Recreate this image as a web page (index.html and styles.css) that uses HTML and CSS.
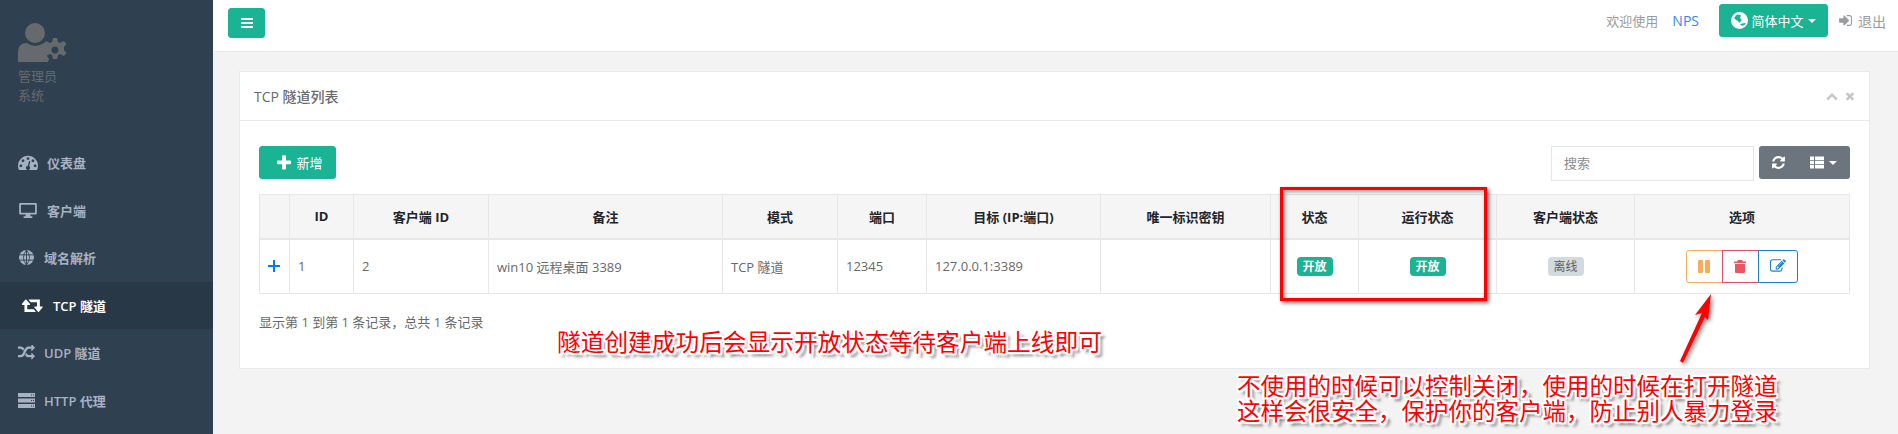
FILE: index.html
```html
<!DOCTYPE html>
<html lang="zh-CN">
<head>
  <meta charset="UTF-8" />
  <meta name="viewport" content="width=device-width, initial-scale=1.0"/>
  <title>TCP 隧道列表</title>
  <link rel="stylesheet" href="styles.css">
</head>
<body>
  <aside class="sidebar">
    <div class="profile">
      <svg class="profile-icon" viewBox="0 0 49 39">
        <circle cx="17" cy="10" r="10"/>
        <path d="M0 39v-10q0-9 9-9q4 3 8 3t9-3q3 0 5 1q-2 3-3 6q0 6 3 9l-1 3z"/>
        <path transform="translate(-1 2.500)" fill-rule="evenodd" d="M36 12.500h4l1 4 2 1 4-2 2.500 3-2.500 3v3l2.500 3-2.500 3-4-2-2 1-1 4h-4l-1-4-2-1-4 2-2.500-3 2.500-3v-3l-2.500-3 2.500-3 4 2 2-1zm2 8.500a3.500 3.500 0 1 0 0 7 3.500 3.500 0 0 0 0-7z"/>
      </svg>
      <div class="profile-name">管理员</div>
      <div class="profile-role">系统</div>
    </div>
    <nav class="menu">
      <a class="menu-item">
        <svg class="icon w20" viewBox="0 192 1792 1344"><path d="M384 1152q0-53-37.500-90.500t-90.500-37.500-90.500 37.500-37.500 90.500 37.500 90.500 90.500 37.500 90.500-37.500 37.500-90.500zm192-448q0-53-37.500-90.500t-90.500-37.500-90.500 37.500-37.500 90.500 37.500 90.500 90.500 37.500 90.500-37.500 37.500-90.500zm428 481l101-382q6-26-7.500-48.500t-38.500-29.500-48 6.500-30 39.500l-101 382q-60 5-107 43.500t-63 98.500q-20 77 20 146t117 89 146-20 89-117q16-60-6-117t-72-91zm660-33q0-53-37.500-90.500t-90.500-37.500-90.500 37.500-37.500 90.500 37.500 90.500 90.500 37.500 90.500-37.500 37.500-90.500zm-640-640q0-53-37.500-90.500t-90.500-37.500-90.500 37.500-37.500 90.500 37.500 90.500 90.500 37.500 90.500-37.500 37.500-90.500zm448 192q0-53-37.500-90.500t-90.500-37.500-90.500 37.500-37.500 90.500 37.500 90.500 90.500 37.500 90.500-37.500 37.500-90.500zm320 448q0 261-141 483-19 29-54 29h-1402q-35 0-54-29-141-221-141-483 0-182 71-348t191-286 286-191 348-71 348 71 286 191 191 286 71 348z"/></svg>
        仪表盘
      </a>
      <a class="menu-item">
        <svg class="icon w20" viewBox="0 0 20 17"><path fill-rule="evenodd" d="M1 0h18a1 1 0 0 1 1 1v11a1 1 0 0 1-1 1h-6.500l.5 2h2v2h-10v-2h2l.5-2h-6.500a1 1 0 0 1-1-1v-11a1 1 0 0 1 1-1zm1 2v9h16v-9z"/></svg>
        客户端
      </a>
      <a class="menu-item">
        <svg class="icon w17" viewBox="0 0 17 17"><circle cx="8.500" cy="8.500" r="8.500"/><path d="M0 5.500h17M0 11.500h17M8.500 0v17M8.500 0q-7 8.500 0 17M8.500 0q7 8.500 0 17" fill="none" stroke="#2f4050" stroke-width="1"/></svg>
        域名解析
      </a>
      <a class="menu-item active">
        <svg class="icon w21" viewBox="0 256 1856 1280"><path d="M1216 1504q0 13-9.500 22.500t-22.500 9.500h-960q-8 0-13.500-2t-9-7-5.500-8-3-11.500-1-11.500v-600h-192q-26 0-45-19t-19-45q0-24 15-41l320-384q19-22 49-22t49 22l320 384q15 17 15 41 0 26-19 45t-45 19h-192v384h576q16 0 25 11l160 192q7 10 7 21zm640-416q0 24-15 41l-320 384q-20 23-49 23t-49-23l-320-384q-15-17-15-41 0-26 19-45t45-19h192v-384h-576q-16 0-25-12l-160-192q-7-9-7-20 0-13 9.500-22.500t22.500-9.500h960q8 0 13.500 2t9 7 5.500 8 3 11.500 1 11.500v600h192q26 0 45 19t19 45z"/></svg>
        TCP 隧道
      </a>
      <a class="menu-item">
        <svg class="icon w17" viewBox="0 128 1792 1536"><path d="M666 481q-60 92-137 273-22-45-37-72.500t-40.500-63.500-51-56.500-63-35-81.500-14h-224q-14 0-23-9t-9-23v-192q0-14 9-23t23-9h224q250 0 410 225zm1126 799q0 14-9 23l-320 320q-9 9-23 9-13 0-22.500-9.500t-9.500-22.500v-192q-32 0-85 .5t-81 1-73-1-71-5-64-10.500-63-18.500-58-28.500-59-40-55-53.500-56-69q59-93 136-273 22 45 37 72.500t40.500 63.500 51 56.500 63 35 81.500 14h256v-192q0-14 9-23t23-9q12 0 24 10l319 319q9 9 9 23zm0-896q0 14-9 23l-320 320q-9 9-23 9-13 0-22.500-9.500t-9.500-22.500v-192h-256q-48 0-87 15t-69 45-51 61.500-45 77.500q-32 62-78 171-29 66-49.500 111t-54 105-64 100-74 83-90 68.500-106.500 42-128 16.500h-224q-14 0-23-9t-9-23v-192q0-14 9-23t23-9h224q48 0 87-15t69-45 51-61.500 45-77.500q32-62 78-171 29-66 49.500-111t54-105 64-100 74-83 90-68.500 106.500-42 128-16.500h256v-192q0-14 9-23t23-9q12 0 24 10l319 319q9 9 9 23z"/></svg>
        UDP 隧道
      </a>
      <a class="menu-item">
        <svg class="icon w17" viewBox="0 0 17 15"><path fill-rule="evenodd" d="M0 0h17v4h-17zm13 1.500v1h1v-1zm2 0v1h1v-1zM0 5.500h17v4h-17zm13 1.500v1h1v-1zm2 0v1h1v-1zM0 11h17v4h-17zm13 1.500v1h1v-1zm2 0v1h1v-1z"/></svg>
        HTTP 代理
      </a>
    </nav>
  </aside>

  <div class="main">
    <header class="navbar">
      <button class="btn-green toggle">
        <svg class="icon" viewBox="0 0 1792 1792"><path d="M1664 1344v128q0 26-19 45t-45 19h-1408q-26 0-45-19t-19-45v-128q0-26 19-45t45-19h1408q26 0 45 19t19 45zm0-512v128q0 26-19 45t-45 19h-1408q-26 0-45-19t-19-45v-128q0-26 19-45t45-19h1408q26 0 45 19t19 45zm0-512v128q0 26-19 45t-45 19h-1408q-26 0-45-19t-19-45v-128q0-26 19-45t45-19h1408q26 0 45 19t19 45z"/></svg>
      </button>
      <div class="nav-right">
        <span class="welcome">欢迎使用</span>
        <a class="brand">NPS</a>
        <button class="btn-green lang">
          <svg class="icon globe" viewBox="0 0 17 17"><path fill-rule="evenodd" d="M8.500 0a8.500 8.500 0 1 0 0 17 8.500 8.500 0 0 0 0-17zM3 6l3-3.500 4 .5-1 3 2 2-3 3-1-2-2-1zm6 6l5-1 1 1-4 2z"/></svg>
          简体中文<i class="caret"></i>
        </button>
        <a class="logout">
          <svg class="icon signin" viewBox="0 256 1664 1280"><path d="M1312 896q0 26-19 45l-544 544q-19 19-45 19t-45-19-19-45v-288h-448q-26 0-45-19t-19-45v-384q0-26 19-45t45-19h448v-288q0-26 19-45t45-19 45 19l544 544q19 19 19 45zm352-352v704q0 119-84.500 203.500t-203.500 84.500h-320q-13 0-22.500-9.500t-9.500-22.500q0-4-1-20t-.5-26.500 3-23.500 10-19.500 20.500-6.500h320q66 0 113-47t47-113v-704q0-66-47-113t-113-47h-312l-11.500-1-11.500-3-8-5.500-7-9-2-13.500q0-4-1-20t-.5-26.500 3-23.500 10-19.500 20.500-6.500h320q119 0 203.500 84.500t84.500 203.500z"/></svg>
          退出
        </a>
      </div>
    </header>

    <section class="content">
      <div class="panel">
        <div class="panel-head">
          <h5>TCP 隧道列表</h5>
          <div class="panel-tools">
            <svg class="icon" viewBox="0 0 1792 1792"><path d="M1683 1331l-166 165q-19 19-45 19t-45-19l-531-531-531 531q-19 19-45 19t-45-19l-166-165q-19-19-19-45.500t19-45.500l742-741q19-19 45-19t45 19l742 741q19 19 19 45.500t-19 45.500z"/></svg>
            <svg class="icon" viewBox="0 0 1792 1792"><path d="M1490 1322q0 40-28 68l-136 136q-28 28-68 28t-68-28l-294-294-294 294q-28 28-68 28t-68-28l-136-136q-28-28-28-68t28-68l294-294-294-294q-28-28-28-68t28-68l136-136q28-28 68-28t68 28l294 294 294-294q28-28 68-28t68 28l136 136q28 28 28 68t-28 68l-294 294 294 294q28 28 28 68z"/></svg>
          </div>
        </div>
        <div class="panel-body">
          <div class="toolbar">
            <button class="btn-green add">
              <svg class="icon" viewBox="0 0 1792 1792"><path d="M1600 736v192q0 40-28 68t-68 28h-416v416q0 40-28 68t-68 28h-192q-40 0-68-28t-28-68v-416h-416q-40 0-68-28t-28-68v-192q0-40 28-68t68-28h416v-416q0-40 28-68t68-28h192q40 0 68 28t28 68v416h416q40 0 68 28t28 68z"/></svg>
              新增
            </button>
            <div class="search-box">搜索</div>
            <div class="tool-group">
              <svg class="icon" viewBox="0 0 1792 1792"><path d="M1639 1056q0 5-1 7-64 268-268 434.500t-478 166.500q-146 0-282.500-55t-243.500-157l-129 129q-19 19-45 19t-45-19-19-45v-448q0-26 19-45t45-19h448q26 0 45 19t19 45-19 45l-137 137q71 66 161 102t187 36q134 0 250-65t186-179q11-17 53-117 8-23 30-23h192q13 0 22.500 9.500t9.500 22.500zm25-800v448q0 26-19 45t-45 19h-448q-26 0-45-19t-19-45 19-45l138-138q-148-137-349-137-134 0-250 65t-186 179q-11 17-53 117-8 23-30 23h-199q-13 0-22.500-9.500t-9.500-22.500v-7q65-268 270-434.500t480-166.500q146 0 284 55.500t245 156.500l130-129q19-19 45-19t45 19 19 45z"/></svg>
              <span class="columns">
                <svg class="icon" viewBox="0 0 14 12"><path d="M0 0h4v3.500h-4zM5 0h9v3.500h-9zM0 4.300h4v3.400h-4zM5 4.300h9v3.400h-9zM0 8.500h4v3.500h-4zM5 8.500h9v3.500h-9z"/></svg>
                <i class="caret"></i>
              </span>
            </div>
          </div>

          <table class="grid">
            <colgroup>
              <col class="c-expand"><col class="c-id"><col class="c-client"><col class="c-remark"><col class="c-mode"><col class="c-port"><col class="c-target"><col class="c-key"><col class="c-status"><col class="c-run"><col class="c-online"><col class="c-opt">
            </colgroup>
            <thead>
              <tr>
                <th></th><th>ID</th><th>客户端 ID</th><th>备注</th><th>模式</th><th>端口</th><th>目标 (IP:端口)</th><th>唯一标识密钥</th><th>状态</th><th>运行状态</th><th>客户端状态</th><th>选项</th>
              </tr>
            </thead>
            <tbody>
              <tr>
                <td class="expand"><svg class="icon" viewBox="0 0 12 12"><path d="M5 0h2v5h5v2h-5v5h-2v-5h-5v-2h5z"/></svg></td>
                <td>1</td>
                <td>2</td>
                <td>win10 远程桌面 3389</td>
                <td>TCP 隧道</td>
                <td>12345</td>
                <td>127.0.0.1:3389</td>
                <td></td>
                <td class="center"><span class="badge on">开放</span></td>
                <td class="center"><span class="badge on">开放</span></td>
                <td class="center"><span class="badge off">离线</span></td>
                <td class="center">
                  <div class="actions">
                    <button class="act pause"><svg class="icon" viewBox="0 0 12 13"><path d="M0 1a1 1 0 0 1 1-1h3a1 1 0 0 1 1 1v11a1 1 0 0 1-1 1h-3a1 1 0 0 1-1-1zM7 1a1 1 0 0 1 1-1h3a1 1 0 0 1 1 1v11a1 1 0 0 1-1 1h-3a1 1 0 0 1-1-1z"/></svg></button>
                    <button class="act del"><svg class="icon" viewBox="0 0 12 13"><path d="M4 0h4l1 1.500h3v1.500h-12v-1.500h3zM1 4h10v8a1 1 0 0 1-1 1h-8a1 1 0 0 1-1-1z"/></svg></button>
                    <button class="act edit"><svg class="icon" viewBox="0 128 1792 1536"><path d="M888 1184l116-116-152-152-116 116v56h96v96h56zm440-720q-16-16-33 1l-350 350q-17 17-1 33t33-1l350-350q17-17 1-33zm80 594v190q0 119-84.500 203.500t-203.500 84.500h-832q-119 0-203.500-84.500t-84.500-203.500v-832q0-119 84.500-203.500t203.500-84.500h832q63 0 117 25 15 7 18 23 3 17-9 29l-49 49q-14 14-32 8-23-6-45-6h-832q-66 0-113 47t-47 113v832q0 66 47 113t113 47h832q66 0 113-47t47-113v-126q0-13 9-22l64-64q15-15 35-7t20 29zm-96-738l288 288-672 672h-288v-288zm444 132l-92 92-288-288 92-92q28-28 68-28t68 28l152 152q28 28 28 68t-28 68z"/></svg></button>
                  </div>
                </td>
              </tr>
            </tbody>
          </table>

          <p class="summary">显示第 1 到第 1 条记录，总共 1 条记录</p>
        </div>
      </div>
    </section>
  </div>

  <!-- 截图上的标注 -->
  <div class="red-box"></div>
  <div class="note note-one">隧道创建成功后会显示开放状态等待客户端上线即可</div>
  <div class="note note-two">不使用的时候可以控制关闭，使用的时候在打开隧道<br>这样会很安全，保护你的客户端，防止别人暴力登录</div>
  <svg class="arrow" viewBox="0 0 40 74">
    <path d="M35 2L19 23l7-2L4 69l3 2L29 25l3 3z"/>
  </svg>
</body>
</html>
```

FILE: styles.css
```css
* {
  box-sizing: border-box;
}
html, body {
  height: 100%;
}
body {
  margin: 0;
  display: flex;
  overflow: hidden;
  font-family: "Open Sans", "Noto Sans CJK SC", sans-serif;
  font-size: 13px;
  color: #676a6c;
  background-color: #f3f3f4;
}
button {
  font-family: inherit;
  cursor: pointer;
}
.icon {
  display: block;
  fill: currentColor;
  flex: none;
}
.caret {
  display: inline-block;
  border-top: 4px solid currentColor;
  border-left: 4px solid transparent;
  border-right: 4px solid transparent;
}

/* sidebar */
.sidebar {
  width: 213px;
  flex: none;
  background-color: #2f4050;
  color: #a7b1c2;
}
.profile {
  padding: 23px 18px 0;
  height: 139px;
  color: #676a6c;
  line-height: 19px;
}
.profile-icon {
  display: block;
  width: 49px;
  height: 39px;
  margin-bottom: 5px;
  fill: #676a6c;
}
.profile-name {
  font-size: 13px;
}
.profile-role {
  font-size: 13px;
}
.menu-item {
  display: flex;
  align-items: center;
  gap: 9px;
  height: 47.5px;
  padding-left: 18px;
  font-weight: 600;
  white-space: nowrap;
}
.menu-item.active {
  padding-left: 22px;
  gap: 10px;
  color: #fff;
  background-color: #293846;
}
.w20 {
  width: 20px;
  height: 15px;
}
.w17 {
  width: 17px;
  height: 15px;
}
.w21 {
  width: 21px;
  height: 14px;
}

/* top bar */
.main {
  flex: 1;
  min-width: 0;
}
.navbar {
  height: 52px;
  display: flex;
  align-items: flex-start;
  justify-content: space-between;
  background-color: #fff;
  border-bottom: 1px solid #e7eaec;
}
.btn-green {
  background-color: #1ab394;
  border: 1px solid #1ab394;
  border-radius: 3px;
  color: #fff;
}
.toggle {
  width: 37px;
  height: 30px;
  margin: 8px 0 0 15px;
  padding: 0;
  display: flex;
  align-items: center;
  justify-content: center;
}
.toggle .icon {
  width: 14px;
  height: 14px;
}
.nav-right {
  display: flex;
  align-items: center;
  height: 41px;
  padding-right: 12px;
}
.welcome {
  color: #999c9e;
  margin-right: 14px;
}
.brand {
  font-size: 14px;
  color: #3b82f6;
  margin-right: 20px;
}
.lang {
  width: 109px;
  height: 33px;
  padding: 0;
  display: flex;
  align-items: center;
  justify-content: center;
  gap: 3px;
  font-size: 13px;
}
.lang .globe {
  width: 17px;
  height: 17px;
}
.lang .caret {
  margin-left: 1px;
}
.logout {
  display: flex;
  align-items: center;
  gap: 6px;
  margin-left: 10px;
  font-size: 14px;
  color: #999c9e;
}
.signin {
  width: 14px;
  height: 11px;
}

/* panel */
.content {
  padding: 19px 28px 0 26px;
}
.panel {
  height: 298px;
  background-color: #fff;
  border: 1px solid #e7eaec;
}
.panel-head {
  height: 49px;
  display: flex;
  align-items: center;
  justify-content: space-between;
  padding: 0 13px 0 14px;
  border-bottom: 1px solid #e7eaec;
}
.panel-head h5 {
  margin: 0;
  font-size: 14px;
  font-weight: 500;
  color: #676a6c;
}
.panel-tools {
  display: flex;
  gap: 6px;
  color: #c4c6c8;
}
.panel-tools .icon {
  width: 12px;
  height: 12px;
}
.panel-body {
  padding: 25px 19px 0;
}
.toolbar {
  display: flex;
  align-items: flex-start;
  height: 35px;
  margin-bottom: 13px;
}
.add {
  width: 77px;
  height: 33px;
  padding: 0 0 0 3px;
  display: flex;
  align-items: center;
  justify-content: center;
  gap: 3px;
  font-size: 13px;
  font-weight: 400;
}
.add .icon {
  width: 18px;
  height: 18px;
}
.search-box {
  margin-left: auto;
  width: 203px;
  height: 35px;
  padding: 0 12px;
  line-height: 33px;
  border: 1px solid #e5e6e7;
  color: #8a8d8f;
}
.tool-group {
  width: 91px;
  height: 33px;
  margin-left: 5px;
  display: flex;
  align-items: center;
  justify-content: space-between;
  padding: 0 13px 0 12px;
  background-color: #6c757d;
  border-radius: 3px;
  color: #fff;
}
.tool-group > .icon {
  width: 15px;
  height: 15px;
}
.columns {
  display: flex;
  align-items: center;
  gap: 5px;
}
.columns .icon {
  width: 14px;
  height: 13px;
}

/* table */
.grid {
  width: 100%;
  table-layout: fixed;
  border-collapse: collapse;
  color: #676a6c;
}
.c-expand { width: 30px; }
.c-id { width: 64px; }
.c-client { width: 135px; }
.c-remark { width: 234px; }
.c-mode { width: 115px; }
.c-port { width: 89px; }
.c-target { width: 174px; }
.c-key { width: 170px; }
.c-status { width: 88px; }
.c-run { width: 138px; }
.c-online { width: 138px; }
.grid th, .grid td {
  border: 1px solid #e7e7e7;
  padding: 0 8px;
}
.grid th {
  height: 44px;
  border-bottom-width: 2px;
  background-color: #f5f5f6;
  color: #212529;
  font-weight: 700;
  text-align: center;
}
.grid td {
  height: 55px;
  white-space: nowrap;
}
.grid td.center {
  text-align: center;
  padding: 0;
}
.grid td.expand {
  padding: 0 0 0 8px;
  color: #007bff;
}
.expand .icon {
  width: 12px;
  height: 12px;
}
.badge {
  display: inline-block;
  width: 36px;
  height: 19px;
  line-height: 19px;
  border-radius: 4px;
  font-size: 12px;
  font-weight: 700;
  text-align: center;
}
.badge.on {
  background-color: #1ab394;
  color: #fff;
}
.badge.off {
  background-color: #d1dade;
  color: #5e5e5e;
  font-weight: 400;
}
.actions {
  display: inline-flex;
  vertical-align: middle;
}
.act {
  width: 37px;
  height: 33px;
  padding: 0;
  margin-left: -1px;
  display: flex;
  align-items: center;
  justify-content: center;
  background-color: #fff;
  border: 1px solid;
}
.act .icon {
  width: 12px;
  height: 13px;
}
.act.pause {
  color: #f8ac59;
  border-radius: 3px 0 0 3px;
}
.act.del {
  color: #ed5565;
  border-color: #e2505f;
}
.act.edit {
  width: 40px;
  color: #1c84c6;
  border-radius: 0 3px 3px 0;
}
.act.edit .icon {
  width: 16px;
  height: 14px;
}
.summary {
  margin: 19px 0 0;
  line-height: 18px;
}

/* annotations lying over the screenshot */
.red-box {
  position: absolute;
  left: 1280px;
  top: 187px;
  width: 207px;
  height: 114px;
  border: 3px solid #ff0000;
  box-shadow: 2px 2px 4px rgba(0, 0, 0, .55), inset 2px 2px 4px rgba(0, 0, 0, .4);
}
.note {
  position: absolute;
  color: #ff0000;
  white-space: nowrap;
  text-shadow: 2px 0 0 #fff, -2px 0 0 #fff, 0 2px 0 #fff, 0 -2px 0 #fff, 1px 1px 0 #fff, -1px -1px 0 #fff, 1px -1px 0 #fff, -1px 1px 0 #fff, 2px 2px 1px #fff, -2px -2px 1px #fff, 2px -2px 1px #fff, -2px 2px 1px #fff, 4px 4px 3px rgba(0, 0, 0, .55);
}
.note-one {
  left: 557px;
  top: 325px;
  font-size: 23.7px;
  line-height: 34px;
}
.note-two {
  left: 1237px;
  top: 374px;
  font-size: 23.5px;
  line-height: 25px;
}
.arrow {
  position: absolute;
  left: 1676px;
  top: 292px;
  width: 40px;
  height: 74px;
  fill: #ff0000;
  filter: drop-shadow(2px 2px 2px rgba(0, 0, 0, .5));
}
```
